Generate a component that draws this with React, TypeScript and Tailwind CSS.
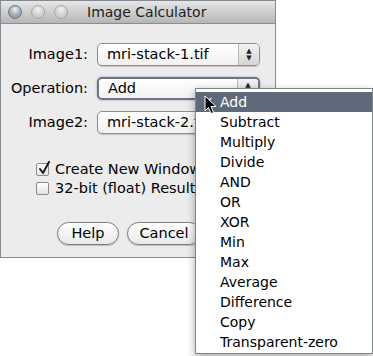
const font = { fontFamily: '"DejaVu Sans", "Liberation Sans", sans-serif' };

const ops = [
  "Add",
  "Subtract",
  "Multiply",
  "Divide",
  "AND",
  "OR",
  "XOR",
  "Min",
  "Max",
  "Average",
  "Difference",
  "Copy",
  "Transparent-zero",
];

const Light = ({ active }: { active?: boolean }) => (
  <div
    className={
      active
        ? "w-[14px] h-[14px] rounded-full border border-[#6f7a86] bg-[radial-gradient(circle_at_50%_30%,#eef2f6_0%,#a9b4c0_45%,#7d8896_100%)]"
        : "w-[14px] h-[14px] rounded-full border border-[#a8a8a8] bg-[radial-gradient(circle_at_50%_30%,#f2f2f2_0%,#d0d0d0_55%,#bdbdbd_100%)]"
    }
  />
);

const Popup = ({ value, focused }: { value: string; focused?: boolean }) => (
  <div
    className={
      "w-[163px] h-[23px] flex items-stretch rounded-[5px] bg-gradient-to-b from-white to-[#f1f1f1] overflow-hidden " +
      (focused
        ? "border-2 border-[#6e7682] shadow-[0_0_2px_#7f8fa6]"
        : "border border-[#8f8f8f] shadow-[0_1px_1px_rgba(0,0,0,0.18)]")
    }
  >
    <div className="flex-1 flex items-center pl-[9px] text-[14.5px] text-black">{value}</div>
    <div className="w-[21px] border-l border-[#b7b7b7] bg-gradient-to-b from-[#f3f3f3] to-[#d6d6d6] flex flex-col items-center justify-center leading-none text-[7px] text-[#222]">
      <span>▲</span>
      <span>▼</span>
    </div>
  </div>
);

const Check = ({ checked }: { checked?: boolean }) => (
  <div className="relative w-[13px] h-[13px] rounded-[2px] border border-[#8a8a8a] bg-gradient-to-b from-white to-[#e4e4e4]">
    {checked && (
      <svg className="absolute -top-[3px] left-[1px]" width="13" height="14" viewBox="0 0 13 14">
        <path d="M2 8 L5 12 L11 1" fill="none" stroke="#1a1a1a" strokeWidth="2" strokeLinecap="round" strokeLinejoin="round" />
      </svg>
    )}
  </div>
);

const PillButton = ({ label, w }: { label: string; w: string }) => (
  <div
    className={
      w +
      " h-[23px] rounded-full border border-[#7c7c7c] bg-gradient-to-b from-white to-[#e9e9e9] shadow-[0_1px_1px_rgba(0,0,0,0.2)] flex items-center justify-center text-[14.5px] text-black"
    }
  >
    {label}
  </div>
);

export default function App() {
  return (
    <div className="relative w-[373px] h-[356px] bg-white overflow-hidden" style={font}>
      {/* dialog */}
      <div className="w-[276px] h-[258px] border border-[#858b93] bg-[#ececec] flex flex-col">
        <div className="h-[23px] flex items-center px-[7px] bg-gradient-to-b from-[#e7e7e7] to-[#b6b6b6] border-b border-[#8c8c8c]">
          <div className="flex gap-[9px]">
            <Light active />
            <Light />
            <Light />
          </div>
          <span className="ml-[19px] text-[14px] text-[#1d1d1d]">Image Calculator</span>
        </div>

        <div className="pt-[19px] flex flex-col gap-[11px]">
          {[
            ["Image1:", "mri-stack-1.tif", false],
            ["Operation:", "Add", true],
            ["Image2:", "mri-stack-2.tif", false],
          ].map(([label, value, focused]) => (
            <div key={label as string} className="flex items-center">
              <span className="w-[87px] text-right text-[14.5px] text-black">{label as string}</span>
              <div className="ml-[9px]">
                <Popup value={value as string} focused={focused as boolean} />
              </div>
            </div>
          ))}
        </div>

        <div className="pl-[35px] pt-[29px] flex flex-col gap-[6px] text-[14.5px] text-black">
          <div className="flex items-center gap-[6px] h-[13px]">
            <Check checked />
            <span>Create New Window</span>
          </div>
          <div className="flex items-center gap-[6px] h-[13px]">
            <Check />
            <span>32-bit (float) Result</span>
          </div>
        </div>

        <div className="pl-[56px] pt-[27px] flex gap-[8px]">
          <PillButton label="Help" w="w-[62px]" />
          <PillButton label="Cancel" w="w-[74px]" />
          <PillButton label="OK" w="w-[62px]" />
        </div>
      </div>

      {/* popup menu */}
      <div className="absolute left-[195px] top-[88px] w-[178px] h-[266px] border border-[#7f848a] bg-white shadow-[0_3px_8px_rgba(0,0,0,0.35)] pt-[3px]">
        {ops.map((op, i) => (
          <div
            key={op}
            className={
              "relative h-[20px] flex items-center pl-[24px] text-[14px] " +
              (i === 0 ? "bg-[#5e6a79] text-white" : "text-black")
            }
          >
            {i === 0 && (
              <span className="absolute left-[7px] top-0 text-[13px] text-white">✓</span>
            )}
            {op}
          </div>
        ))}
        <svg className="absolute left-[8px] top-[6px]" width="13" height="20" viewBox="0 0 13 20">
          <path
            d="M1 1 L1 16 L4.5 12.5 L7 18.5 L9.5 17.5 L7 11.5 L12 11.5 Z"
            fill="#000"
            stroke="#fff"
            strokeWidth="1"
            strokeLinejoin="round"
          />
        </svg>
      </div>
    </div>
  );
}
